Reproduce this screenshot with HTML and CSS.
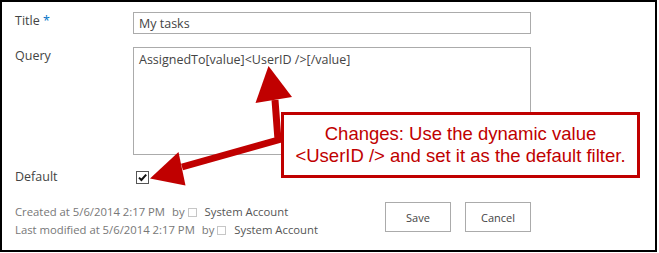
FILE: index.html
```html
<!DOCTYPE html>
<html lang="en">
<head>
    <meta charset="UTF-8">
    <meta name="viewport" content="width=device-width, initial-scale=1.0">
    <title>My tasks - Edit view</title>
    <link rel="stylesheet" href="styles.css">
</head>
<body>
    <div class="frame">
        <form class="form">
            <div class="row">
                <label class="label" for="title">Title <span class="req">*</span></label>
                <input class="field" id="title" type="text" value="My tasks">
            </div>
            <div class="row">
                <label class="label" for="query">Query</label>
                <textarea class="field area" id="query">AssignedTo[value]&lt;UserID /&gt;[/value]</textarea>
            </div>
            <div class="row row-center">
                <span class="label">Default</span>
                <span class="check">
                    <svg width="13" height="13" viewBox="0 0 13 13">
                        <rect x="0.5" y="0.5" width="12" height="12" fill="#fff" stroke="#555"/>
                        <path d="M3 6.6 L5.4 9 L10.2 3.6" fill="none" stroke="#111" stroke-width="2"/>
                    </svg>
                </span>
            </div>
            <div class="footer">
                <div class="meta">
                    <div>Created at 5/6/2014 2:17 PM <span class="by">by</span><span class="presence"></span><span class="user">System Account</span></div>
                    <div>Last modified at 5/6/2014 2:17 PM <span class="by">by</span><span class="presence"></span><span class="user">System Account</span></div>
                </div>
                <div class="buttons">
                    <button type="button">Save</button>
                    <button type="button">Cancel</button>
                </div>
            </div>
        </form>

        <!-- callout arrows, page coordinates -->
        <svg class="arrows" width="659" height="253" viewBox="0 0 659 253">
            <polyline points="275,100 278,140 182,167" fill="none" stroke="#c00000" stroke-width="7" stroke-linejoin="miter"/>
            <polygon points="268.5,66 255.5,103 292,97" fill="#c00000"/>
            <polygon points="150,178.5 178.5,152 185.5,185.5" fill="#c00000"/>
        </svg>

        <div class="callout">
            Changes: Use the dynamic value<br>
            &lt;UserID /&gt; and set it as the default filter.
        </div>
    </div>
</body>
</html>
```

FILE: styles.css
```css
body {
    margin: 0;
    background-color: #fff;
    font-family: "Open Sans", Arial, sans-serif;
    font-size: 12.5px;
    color: #444;
}

.frame {
    position: relative;
    width: 653px;
    height: 248px;
    border: 2px solid #000;
    padding: 0;
}

.form {
    width: 516px;
    padding: 10px 0 0 13px;
}

.row {
    display: grid;
    grid-template-columns: 118px 398px;
    align-items: start;
    margin-bottom: 13px;
}

.row-center {
    align-items: center;
    margin-top: 4px;
    margin-bottom: 16px;
}

.label {
    line-height: 18px;
    color: #444;
}

.req {
    color: #0072c6;
}

.field {
    box-sizing: border-box;
    width: 398px;
    height: 22px;
    margin: 0;
    padding: 0 5px;
    border: 1px solid #ababab;
    font-family: inherit;
    font-size: 12.5px;
    color: #444;
    outline: none;
}

.area {
    height: 108px;
    padding: 4px 5px;
    line-height: 16px;
    resize: none;
}

.check {
    display: flex;
    padding-left: 3px;
}

.check svg {
    display: block;
}

.footer {
    display: flex;
    justify-content: space-between;
    align-items: flex-start;
}

.meta {
    padding-top: 1px;
    font-size: 11.3px;
    line-height: 18px;
    color: #777;
}

.by {
    margin-left: 4px;
}

.presence {
    display: inline-block;
    width: 7px;
    height: 7px;
    margin: 0 8px 0 3px;
    border: 1px solid #c6c6c6;
    vertical-align: -1px;
}

.user {
    color: #555;
}

.buttons {
    display: flex;
    gap: 14px;
}

button {
    box-sizing: border-box;
    width: 66px;
    height: 30px;
    padding: 0;
    background-color: #fff;
    border: 1px solid #ababab;
    font-family: inherit;
    font-size: 11px;
    color: #444;
}

.arrows {
    position: absolute;
    left: -2px;
    top: -2px;
}

.callout {
    position: absolute;
    left: 279px;
    top: 110px;
    box-sizing: border-box;
    width: 359px;
    height: 66px;
    padding: 8px 0;
    background-color: #fff;
    border: 3px solid #c00000;
    font-family: "Liberation Sans", Arial, sans-serif;
    font-size: 18.5px;
    line-height: 22px;
    color: #c00000;
    text-align: center;
}
```
